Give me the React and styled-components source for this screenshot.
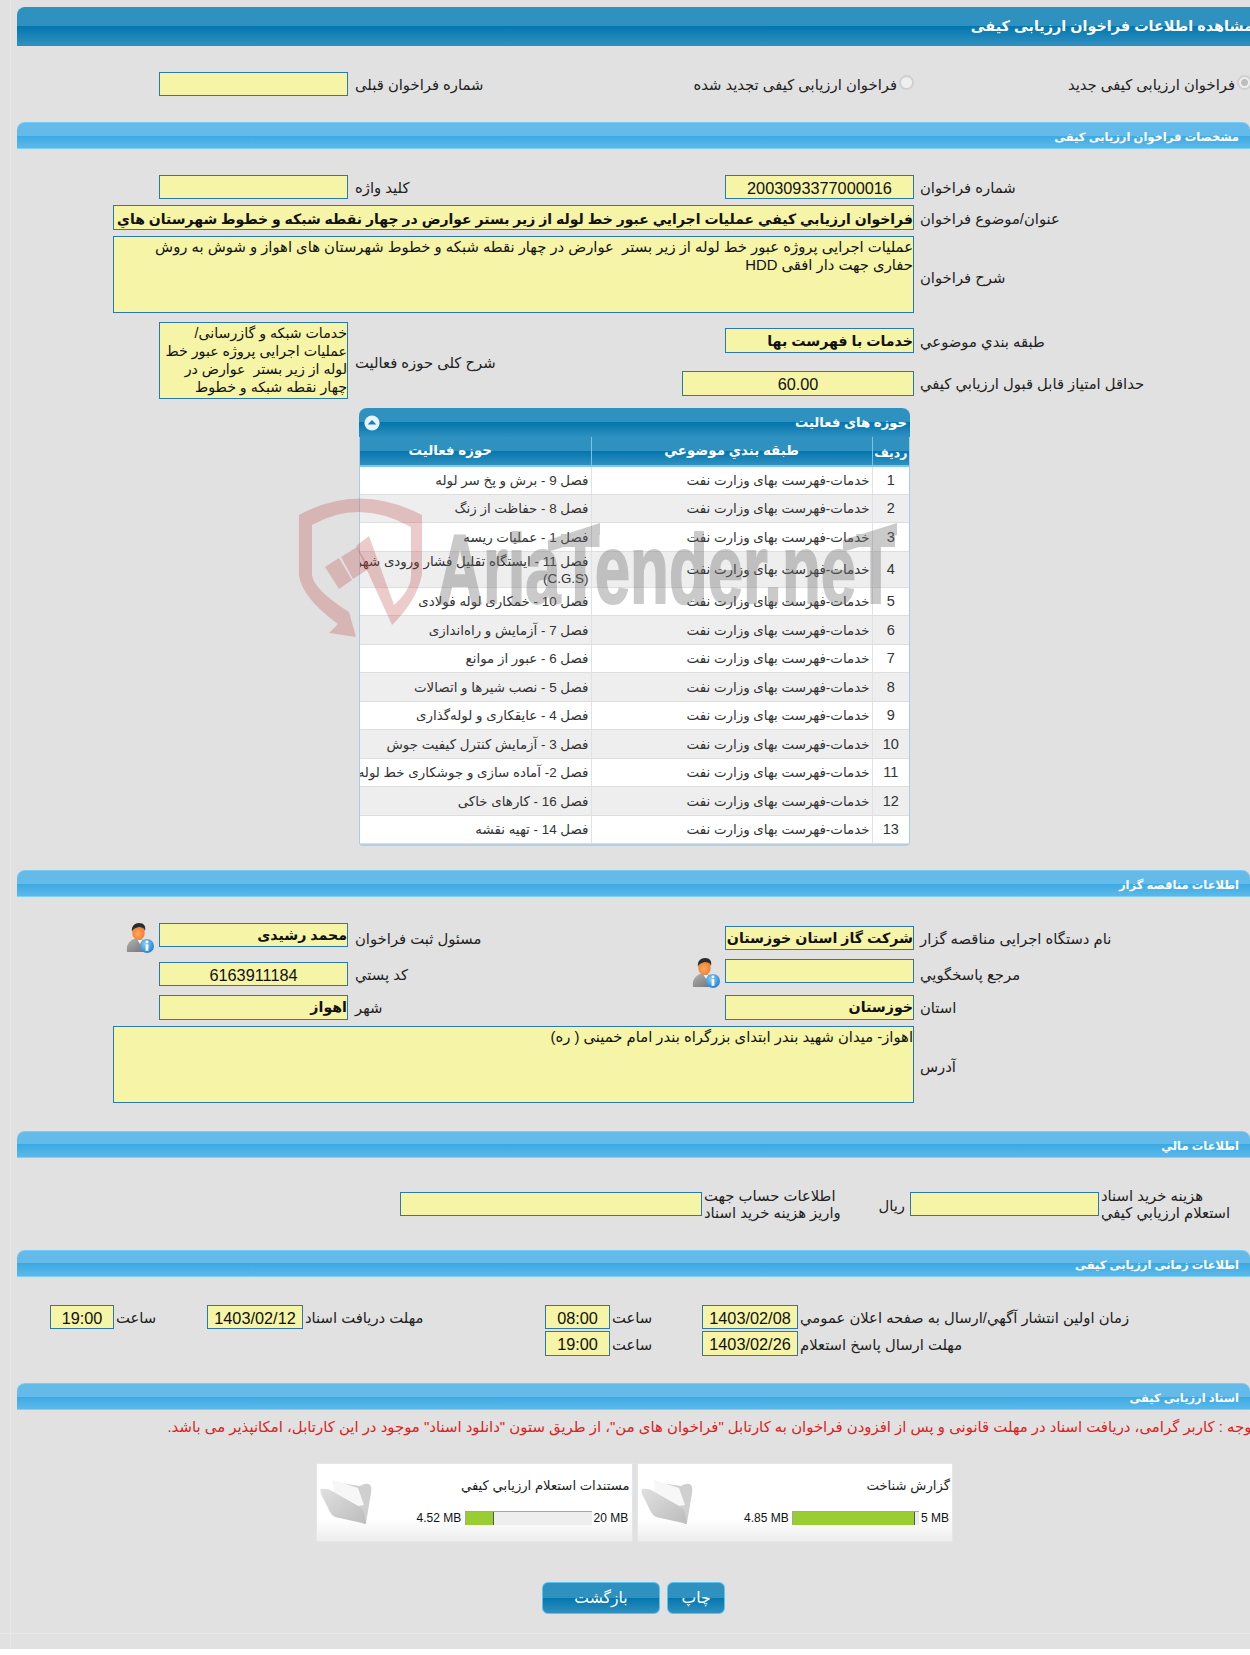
import React from "react";
import styled, { createGlobalStyle } from "styled-components";

const FONT = `"Liberation Sans", "DejaVu Sans", sans-serif`;

const Global = createGlobalStyle`
  html, body { margin: 0; padding: 0; background: #fff; }
  body { font-family: ${FONT}; width: 1250px; overflow-x: hidden; }
  * { box-sizing: border-box; }
`;

const Page = styled.div`
  width: 1250px;
  height: 1649px;
  overflow: hidden;
  background: #e1e1e1;
  direction: rtl;
  padding: 7px 0 0 17px;
  position: relative;
  color: #222;
  font-size: 14.8px;
  &::before {
    content: "";
    position: absolute;
    left: 10px;
    top: 0;
    bottom: 0;
    width: 1px;
    background: #e8e8e8;
  }
  &::after {
    content: "";
    position: absolute;
    left: 0;
    right: 0;
    top: 1633px;
    height: 1px;
    background: #e8e8e8;
  }
`;

const MainHeader = styled.div`
  height: 39px;
  border-top-left-radius: 8px;
  background: linear-gradient(#2f91c0 0, #2f91c0 50%, #0376ae 50%, #2f90bf 100%);
  border-bottom: 1px solid #2a8ec4;
  color: #fff;
  font-weight: bold;
  font-size: 14.4px;
  line-height: 38px;
  white-space: nowrap;
  & > span {
    display: inline-block;
    margin-right: -3px;
  }
`;

const SectionHeader = styled.div`
  height: 27px;
  margin-top: ${(p) => p.$top}px;
  border-radius: 8px 8px 0 0;
  background: linear-gradient(#64bbea 0, #64bbea 50%, #3ba9e2 50%, #5cb9ea 100%);
  border-top: 1px solid #78cbf2;
  border-bottom: 1px solid #7ed0f4;
  color: #fff;
  font-weight: bold;
  font-size: 11.5px;
  line-height: 26px;
  padding: 1px 11px 0 0;
  white-space: nowrap;
`;

const FormGrid = styled.div`
  display: grid;
  grid-template-columns: 336px 189px 377px 189px 46px 96px;
  grid-template-rows: ${(p) => p.$rows};
  row-gap: 6px;
  margin-top: ${(p) => p.$top}px;
`;

const Label = styled.div`
  text-align: left;
  padding-left: ${(p) => (p.$col === 3 ? 7 : 6)}px;
  align-self: center;
  font-size: 14.8px;
  line-height: 18px;
  white-space: nowrap;
  grid-column: ${(p) => p.$col};
  grid-row: ${(p) => p.$row};
  margin-top: ${(p) => p.$mt ?? 2}px;
`;

const Value = styled.div`
  background: #f6f4a6;
  border: 1px solid #2b78ab;
  height: ${(p) => p.$h || 24}px;
  width: ${(p) => (p.$w ? `${p.$w}px` : "auto")};
  grid-column: ${(p) => p.$col || "auto"};
  grid-row: ${(p) => p.$row || "auto"};
  align-self: ${(p) => p.$align || "start"};
  margin-top: ${(p) => p.$mt || 0}px;
  text-align: ${(p) => (p.$center ? "center" : "right")};
  font-size: ${(p) => (p.$fs ? `${p.$fs}px` : p.$num ? "16.3px" : p.$bold ? "14.2px" : "14.8px")};
  font-weight: ${(p) => (p.$bold ? "bold" : "normal")};
  line-height: ${(p) => (p.$multi ? "18px" : `${(p.$h || 24) - 2}px`)};
  white-space: ${(p) => (p.$multi ? "pre-wrap" : "nowrap")};
  overflow: hidden;
  color: #111;
  padding: ${(p) => (p.$multi ? "1px 0 0 0" : `${p.$pt || (p.$num ? 1 : 0)}px 0 0`)};
`;

const RadioField = styled.div`
  display: flex;
  align-items: flex-start;
  white-space: nowrap;
  font-size: 14.8px;
  grid-column: ${(p) => p.$col};
  grid-row: 1;
  margin-right: ${(p) => p.$mr}px;
  line-height: 18px;
  padding-top: 4px;
`;

const RadioDot = styled.span`
  flex: none;
  width: 15px;
  height: 15px;
  border-radius: 50%;
  border: 2px solid #cfcfcf;
  background: ${(p) => (p.$on ? "radial-gradient(#bdbdbd 0 3px, #efefef 4px)" : "#efefef")};
  margin: -1px 0 0 2px;
`;

const PersonSlot = styled.div`
  grid-column: ${(p) => p.$col};
  grid-row: ${(p) => p.$row};
  justify-self: start;
  margin: ${(p) => p.$mt}px 5px 0 5px;
  height: 30px;
  width: 28px;
`;

const TableBox = styled.div`
  width: 551px;
  margin: 9px 340px 0 0;
  position: relative;
  border-radius: 8px 8px 4px 4px;
  background: #fff;
  border-left: 1px solid #a8cde6;
  border-right: 1px solid #a8cde6;
  border-bottom: 2px solid #b4cfe0;
`;

const TableTitle = styled.div`
  height: 29px;
  margin: 0 -1px;
  border-radius: 8px 8px 0 0;
  background: linear-gradient(#2f91c0 0, #2f91c0 50%, #0376ae 50%, #2f90bf 100%);
  color: #fff;
  font-weight: bold;
  font-size: 13.2px;
  line-height: 28px;
  padding: 0 3px 0 5px;
  display: flex;
  justify-content: space-between;
  align-items: center;
`;

const Table = styled.table`
  width: 100%;
  border-collapse: collapse;
  table-layout: fixed;
`;

const HeadCell = styled.th`
  height: 29px;
  padding: ${(p) => p.$pad || "0 0 2px"};
  background: linear-gradient(#2f91c0 0, #2f91c0 50%, #0376ae 50%, #2f90bf 100%);
  color: #fff;
  font-weight: bold;
  font-size: ${(p) => p.$size || 13.4}px;
  text-align: center;
  border-left: 1px solid #7cc3e4;
  border-bottom: 2px solid #7ec9ea;
  &:last-child { border-left: 0; }
`;

const BodyRow = styled.tr`
  background: ${(p) => (p.$even ? "#eeeeee" : "#ffffff")};
  height: ${(p) => p.$h}px;
`;

const Cell = styled.td`
  padding: 1px 2px 0;
  text-align: ${(p) => (p.$center ? "center" : "right")};
  font-size: ${(p) => (p.$center ? "14.5px" : "13.4px")};
  color: #333;
  line-height: 17px;
  white-space: nowrap;
  overflow: hidden;
  border-left: 1px solid #e2e2e2;
  border-bottom: 1px solid #dedede;
  &:last-child { border-left: 0; }
`;

const Watermark = styled.svg`
  position: absolute;
  left: -66px;
  top: 82px;
  pointer-events: none;
  direction: ltr;
`;

const FinanceRow = styled.div`
  display: grid;
  grid-template-columns: 151px 189px 68px 140px 302px;
  grid-template-rows: 24px;
  margin-top: 34px;
  align-items: center;
`;

const TwoLine = styled.div`
  text-align: left;
  padding-left: 2px;
  font-size: 14.8px;
  line-height: 17px;
  white-space: nowrap;
  margin-top: 2px;
`;

const Rial = styled.div`
  padding-right: 5px;
  font-size: 14.8px;
  margin-top: 3px;
`;

const TimeGrid = styled.div`
  display: grid;
  grid-template-columns: 452px 96px 92px 65px 242px 96px 93px 64px;
  grid-template-rows: 24px 25px;
  row-gap: 2px;
  margin-top: 28px;
`;

const TimeLabel = styled.div`
  text-align: left;
  padding-left: 2px;
  align-self: center;
  font-size: 14.8px;
  white-space: nowrap;
  margin-top: 2px;
`;

const Spacer = styled.div`
  grid-column: ${(p) => p.$col};
`;

const Notice = styled.div`
  color: #dc2020;
  font-size: 14.9px;
  line-height: 20px;
  padding-top: 7px;
  white-space: nowrap;
  margin-right: -6px;
`;

const Cards = styled.div`
  display: flex;
  gap: 4px;
  margin: 26px 297px 0 0;
`;

const Card = styled.div`
  width: 316.5px;
  height: 79px;
  display: flex;
  background: linear-gradient(#fff 0, #fff 70%, #ededed 100%);
  border: 1px solid #e6e6e6;
`;

const CardInfo = styled.div`
  flex: 1;
  display: flex;
  flex-direction: column;
  padding: 12px 2px 0 3px;
`;

const CardTitle = styled.div`
  font-size: 13.2px;
  line-height: 20px;
  color: #222;
  white-space: nowrap;
`;

const Usage = styled.div`
  display: flex;
  align-items: center;
  margin-top: 15px;
  gap: 2px;
  font-size: 12px;
  color: #111;
  padding-right: 3px;
`;

const SizeText = styled.span`
  direction: ltr;
  white-space: nowrap;
  font-size: 12px;
  width: ${(p) => p.$w}px;
  text-align: ${(p) => p.$ta};
`;

const Bar = styled.div`
  direction: ltr;
  width: 127px;
  height: 14px;
  background: #eeeeee;
  border-top: 1px solid #a5a5a5;
  border-left: 1px solid #a5a5a5;
`;

const BarFill = styled.div`
  height: 100%;
  background: #9acd32;
  border-right: 1px solid #555;
`;

const FolderSlot = styled.div`
  flex: none;
  width: 60px;
  padding: 15px 5px 0 3px;
  & > svg { filter: blur(0.5px); }
`;

const Buttons = styled.div`
  display: flex;
  justify-content: center;
  gap: 7px;
  margin: 40px 525px 0 0;
  width: 183px;
`;

const Button = styled.button`
  width: ${(p) => p.$w}px;
  height: 32px;
  border: 1px solid #5cc3ec;
  border-radius: 6px;
  background: linear-gradient(#2f91c0 0, #2f91c0 50%, #0376ae 50%, #2f90bf 100%);
  color: #fff;
  font-family: ${FONT};
  font-size: 15.6px;
  padding: 0;
`;

const Person = () => (
  <svg width="28" height="30" viewBox="0 0 28 30">
    <defs>
      <linearGradient id="suit" x1="0" y1="0" x2="1" y2="1">
        <stop offset="0" stopColor="#b5b5b5" />
        <stop offset="1" stopColor="#6f6f6f" />
      </linearGradient>
      <radialGradient id="face" cx=".45" cy=".55" r=".6">
        <stop offset="0" stopColor="#ffa860" />
        <stop offset="1" stopColor="#ee7a2a" />
      </radialGradient>
      <radialGradient id="badge" cx=".4" cy=".35" r=".7">
        <stop offset="0" stopColor="#8fd0f7" />
        <stop offset="1" stopColor="#1b7fd0" />
      </radialGradient>
    </defs>
    <path d="M1 29c-1-7 2-11 7-13l5-1 5 2c3 2 4 5 4 12z" fill="url(#suit)" />
    <path d="M11 16l3 5 3-5-2 1h-2z" fill="#f4f4f4" />
    <ellipse cx="12.5" cy="10" rx="6.2" ry="7" fill="url(#face)" />
    <path d="M6 9C5 3 9 0 13 0c5 0 7 3 6 8-1-3-3-4-6-4-3 1-6 1-7 5z" fill="#2c2c2c" />
    <circle cx="21" cy="23" r="7" fill="url(#badge)" />
    <circle cx="21" cy="18.8" r="1.4" fill="#fff" />
    <rect x="19.6" y="21.2" width="2.8" height="6.6" rx=".6" fill="#fff" />
  </svg>
);

const Folder = () => (
  <svg width="52" height="47" viewBox="0 0 52 47">
    <defs>
      <linearGradient id="fold" x1="0" y1="0" x2="1" y2="1">
        <stop offset="0" stopColor="#e0e0e0" />
        <stop offset="1" stopColor="#bcbcbc" />
      </linearGradient>
    </defs>
    <path d="M13 3L40 7Q47 3 50 6Q52 8 51 14L46 44 30 30Z" fill="#cfcfcf" />
    <path d="M13 1L38 9 44 26 38 27 14 14Z" fill="#f7f7f7" />
    <path d="M1 10Q7 9 12 12L38 27Q43 30 44 34L46 44Q46 46 42 44L15 38Q12 37 10 33L1 15Q0 11 1 10Z" fill="url(#fold)" />
  </svg>
);

const CollapseIcon = () => (
  <svg width="16" height="16" viewBox="0 0 16 16">
    <circle cx="8" cy="8" r="7.6" fill="#e8f4fb" />
    <path d="M3.6 9.5L8 5l4.4 4.5z" fill="#1a7fb3" />
  </svg>
);

const rows = [
  ["فصل 9 - برش و پخ سر لوله", 28],
  ["فصل 8 - حفاظت از زنگ", 28],
  ["فصل 1 - عملیات ریسه", 29],
  [<>فصل 11 - ایستگاه تقلیل فشار ورودی شهر<br />(C.G.S)</>, 35],
  ["فصل 10 - خمکاری لوله فولادی", 28],
  ["فصل 7 - آزمایش و راه‌اندازی", 29],
  ["فصل 6 - عبور از موانع", 28],
  ["فصل 5 - نصب شیرها و اتصالات", 29],
  ["فصل 4 - عایقکاری و لوله‌گذاری", 28],
  ["فصل 3 - آزمایش کنترل کیفیت جوش", 29],
  ["فصل 2- آماده سازی و جوشکاری خط لوله", 28],
  ["فصل 16 - کارهای خاکی", 29],
  ["فصل 14 - تهیه نقشه", 28],
];

export default function App() {
  return (
    <>
      <Global />
      <Page>
        <MainHeader><span>مشاهده اطلاعات فراخوان ارزیابی کیفی</span></MainHeader>

        <FormGrid $rows="24px" $top={26}>
          <RadioField $col={1} $mr={-2}><RadioDot $on />فراخوان ارزیابی کیفی جدید</RadioField>
          <RadioField $col={2} $mr={0}><RadioDot />فراخوان ارزیابی کیفی تجدید شده</RadioField>
          <Label $col={3} $row={1} $mt={2}>شماره فراخوان قبلی</Label>
          <Value $col={4} $row={1} />
        </FormGrid>

        <SectionHeader $top={26}>مشخصات فراخوان ارزیابی کیفی</SectionHeader>

        <FormGrid $rows="24px 25px 77px 34px 40px" $top={26}>
          <Label $col={1} $row={1}>شماره فراخوان</Label>
          <Value $col={2} $row={1} $num $center>2003093377000016</Value>
          <Label $col={3} $row={1}>کلید واژه</Label>
          <Value $col={4} $row={1} />

          <Label $col={1} $row={2}>عنوان/موضوع فراخوان</Label>
          <Value $col="2 / 6" $row={2} $h={25} $pt={2} $fs={14} $bold>فراخوان ارزيابي كيفي عمليات اجرايي عبور خط لوله از زير بستر عوارض در چهار نقطه شبكه و خطوط شهرستان هاي</Value>

          <Label $col={1} $row={3} $mt={6}>شرح فراخوان</Label>
          <Value $col="2 / 6" $row={3} $h={77} $multi>عملیات اجرایی پروژه عبور خط لوله از زیر بستر  عوارض در چهار نقطه شبکه و خطوط شهرستان های اهواز و شوش به روش حفاری جهت دار افقی HDD</Value>

          <Label $col={1} $row={4} $mt={12}>طبقه بندي موضوعي</Label>
          <Value $col={2} $row={4} $h={25} $pt={1} $bold $align="end">خدمات با فهرست بها</Value>
          <Label $col={3} $row="4 / 6" $mt={8}>شرح کلی حوزه فعالیت</Label>
          <Value $col={4} $row="4 / 6" $h={77} $fs={14.2} $multi $align="end">خدمات شبکه و گازرسانی/عملیات اجرایی پروژه عبور خط لوله از زیر بستر  عوارض در چهار نقطه شبکه و خطوط</Value>

          <Label $col={1} $row={5} $mt={10}>حداقل امتیاز قابل قبول ارزیابي کیفي</Label>
          <Value $col={2} $row={5} $w={232} $h={25} $mt={12} $num $center>60.00</Value>
        </FormGrid>

        <TableBox>
          <TableTitle>
            <span>حوزه های فعالیت</span>
            <CollapseIcon />
          </TableTitle>
          <Table>
            <colgroup>
              <col width="37" />
              <col width="281" />
              <col />
            </colgroup>
            <thead>
              <tr>
                <HeadCell $size={12.5} $pad="2px 0 0">رديف</HeadCell>
                <HeadCell>طبقه بندي موضوعي</HeadCell>
                <HeadCell $pad="0 50px 2px 0">حوزه فعالیت</HeadCell>
              </tr>
            </thead>
            <tbody>
              {rows.map(([text, h], i) => (
                <BodyRow key={i} $even={i % 2 === 1} $h={h}>
                  <Cell $center>{i + 1}</Cell>
                  <Cell>خدمات-فهرست بهای وزارت نفت</Cell>
                  <Cell>{text}</Cell>
                </BodyRow>
              ))}
            </tbody>
          </Table>
          <Watermark width="605" height="160" viewBox="0 0 605 160">
            <g fill="rgba(190,70,70,.28)">
              <path fillRule="evenodd" d="M5 25Q65-8 128 25L128 85Q122 112 98 135L62 56 75 46 100 115Q117 100 117 85L117 37Q65 8 18 35L18 85Q20 100 55 122L62 147 35 143 44 134Q8 108 5 85Z" />
              <path d="M31 77L45 68 58 90 45 99Z" />
              <path d="M47 67L63 57 76 78 59 89Z" />
            </g>
            <g opacity=".36" fill="#6e6e6e" stroke="#6e6e6e">
              <text x="143" y="113" fontFamily="Liberation Sans, sans-serif" fontWeight="700" fontSize="99" strokeWidth="2" textLength="458" lengthAdjust="spacingAndGlyphs">AriaTender.neT</text>
              <path d="M254 50L306 33V45L254 62Z" strokeWidth="0" />
              <path d="M549 50L603 33V45L549 62Z" strokeWidth="0" />
            </g>
          </Watermark>
        </TableBox>

        <SectionHeader $top={24}>اطلاعات مناقصه گزار</SectionHeader>

        <FormGrid $rows="27px 30px 28px 77px" $top={26}>
          <Label $col={1} $row={1} $mt={5}>نام دستگاه اجرایی مناقصه گزار</Label>
          <Value $col={2} $row={1} $bold $align="end">شرکت گاز استان خوزستان</Value>
          <Label $col={3} $row={1} $mt={5}>مسئول ثبت فراخوان</Label>
          <Value $col={4} $row={1} $bold>محمد رشیدی</Value>
          <PersonSlot $col={5} $row={1} $mt={0}><Person /></PersonSlot>

          <Label $col={1} $row={2} $mt={9}>مرجع پاسخگويي</Label>
          <Value $col={2} $row={2} $mt={3}></Value>
          <PersonSlot $col={3} $row={2} $mt={2}><Person /></PersonSlot>
          <Label $col={3} $row={2} $mt={9}>کد پستي</Label>
          <Value $col={4} $row={2} $num $center $align="end">6163911184</Value>

          <Label $col={1} $row={3} $mt={4}>استان</Label>
          <Value $col={2} $row={3} $h={25} $bold $align="end">خوزستان</Value>
          <Label $col={3} $row={3} $mt={4}>شهر</Label>
          <Value $col={4} $row={3} $h={25} $bold $align="end">اهواز</Value>

          <Label $col={1} $row={4} $mt={6}>آدرس</Label>
          <Value $col="2 / 6" $row={4} $h={77} $multi>اهواز- میدان شهید بندر ابتدای بزرگراه بندر امام خمینی ( ره)</Value>
        </FormGrid>

        <SectionHeader $top={28}>اطلاعات مالي</SectionHeader>

        <FinanceRow>
          <TwoLine>هزینه خرید اسناد<br />استعلام ارزیابي کیفي</TwoLine>
          <Value />
          <Rial>ریال</Rial>
          <TwoLine>اطلاعات حساب جهت<br />واریز هزینه خرید اسناد</TwoLine>
          <Value />
        </FinanceRow>

        <SectionHeader $top={34}>اطلاعات زمانی ارزیابی کیفی</SectionHeader>

        <TimeGrid>
          <TimeLabel>زمان اولین انتشار آگهي/ارسال به صفحه اعلان عمومي</TimeLabel>
          <Value $num $center>1403/02/08</Value>
          <TimeLabel>ساعت</TimeLabel>
          <Value $num $center>08:00</Value>
          <TimeLabel>مهلت دریافت اسناد</TimeLabel>
          <Value $num $center>1403/02/12</Value>
          <TimeLabel>ساعت</TimeLabel>
          <Value $num $center>19:00</Value>

          <TimeLabel>مهلت ارسال پاسخ استعلام</TimeLabel>
          <Value $num $center $h={25}>1403/02/26</Value>
          <TimeLabel>ساعت</TimeLabel>
          <Value $num $center $h={25}>19:00</Value>
          <Spacer $col="5 / 9" />
        </TimeGrid>

        <SectionHeader $top={27}>اسناد ارزیابی کیفی</SectionHeader>

        <Notice>توجه : کاربر گرامی، دریافت اسناد در مهلت قانونی و پس از افزودن فراخوان به کارتابل "فراخوان های من"، از طریق ستون "دانلود اسناد" موجود در این کارتابل، امکانپذیر می باشد.</Notice>

        <Cards>
          <Card>
            <CardInfo>
              <CardTitle>گزارش شناخت</CardTitle>
              <Usage>
                <SizeText $w={26} $ta="right">5 MB</SizeText>
                <Bar><BarFill style={{ width: "97%" }} /></Bar>
                <SizeText $w={46} $ta="left">4.85 MB</SizeText>
              </Usage>
            </CardInfo>
            <FolderSlot><Folder /></FolderSlot>
          </Card>
          <Card>
            <CardInfo>
              <CardTitle>مستندات استعلام ارزیابي کیفي</CardTitle>
              <Usage>
                <SizeText $w={33} $ta="right">20 MB</SizeText>
                <Bar><BarFill style={{ width: "23%" }} /></Bar>
                <SizeText $w={46} $ta="left">4.52 MB</SizeText>
              </Usage>
            </CardInfo>
            <FolderSlot><Folder /></FolderSlot>
          </Card>
        </Cards>

        <Buttons>
          <Button $w={58}>چاپ</Button>
          <Button $w={118}>بازگشت</Button>
        </Buttons>
      </Page>
    </>
  );
}
